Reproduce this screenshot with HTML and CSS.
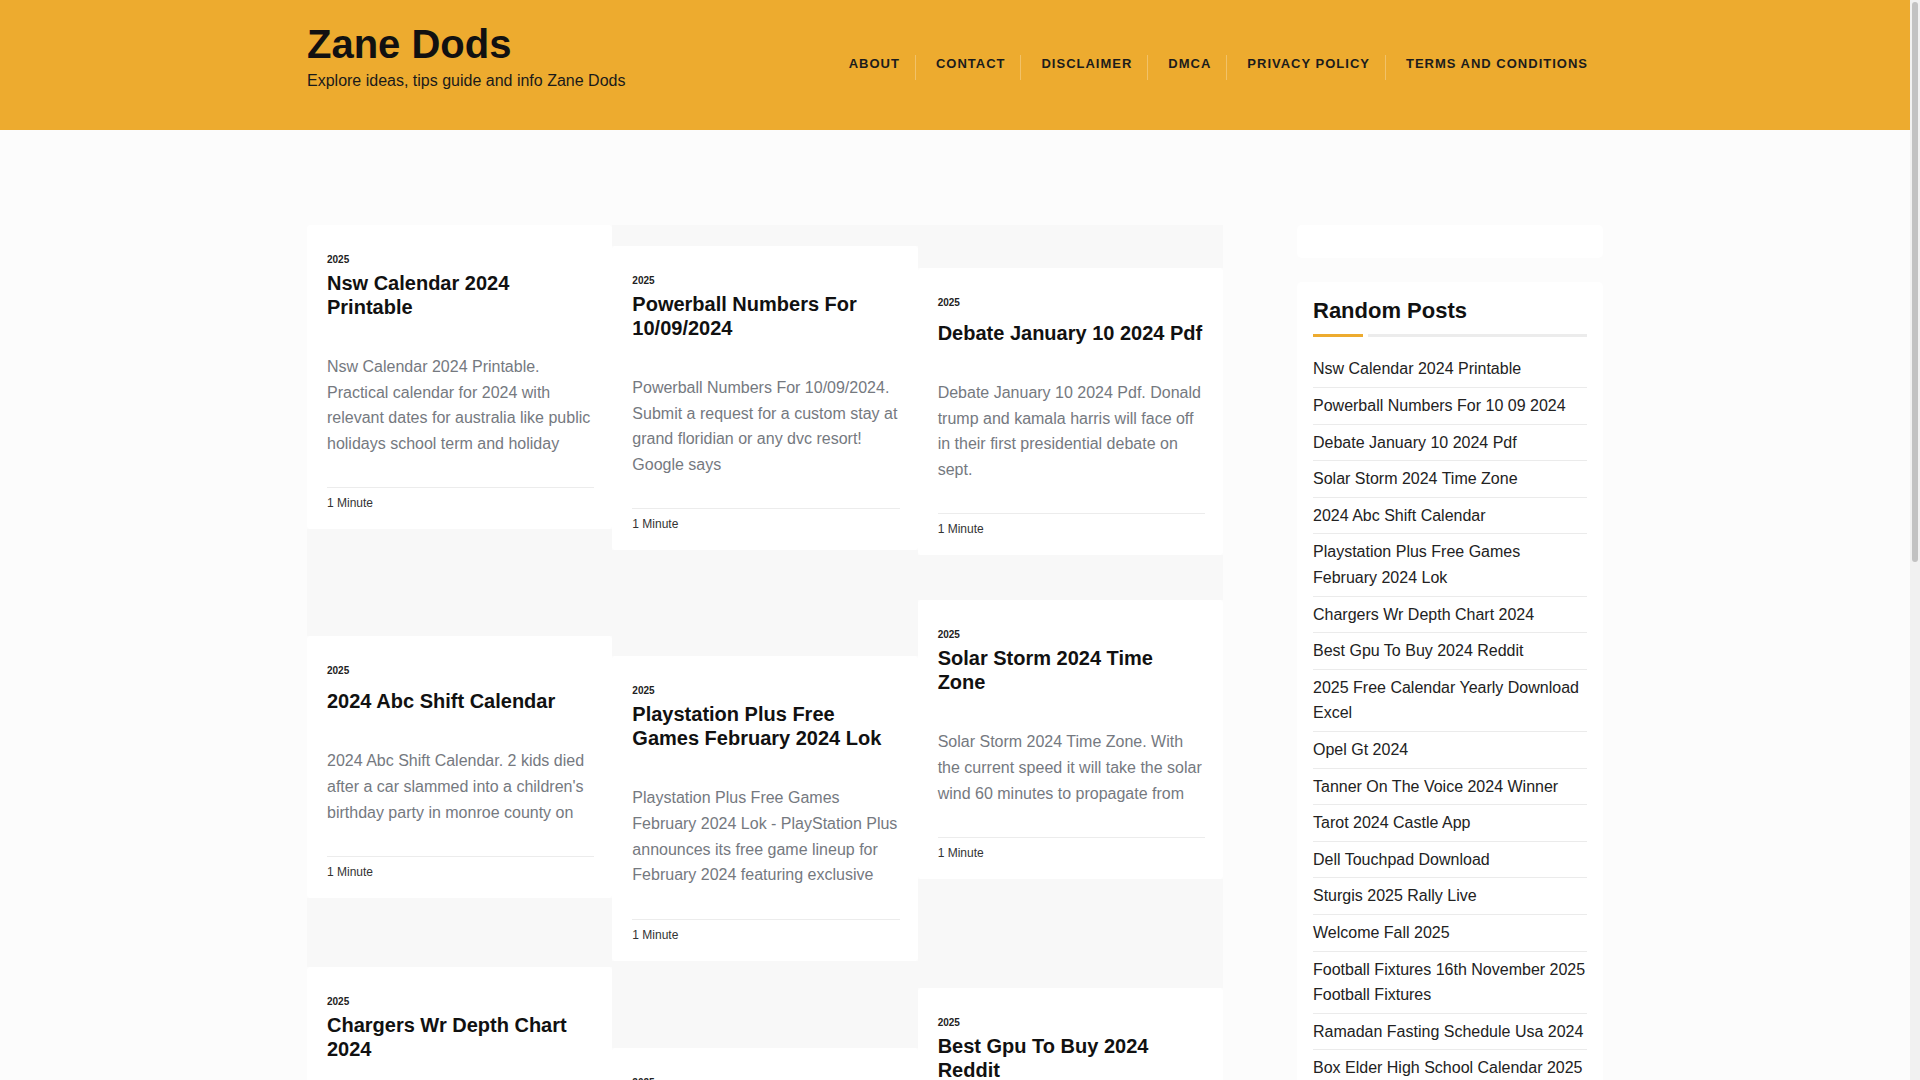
FILE: index.html
```html
<!DOCTYPE html>
<html lang="en">
<head>
<meta charset="utf-8">
<title>Zane Dods</title>
<link rel="stylesheet" href="styles.css">
</head>
<body>
<header class="site-header">
  <div class="container header-inner">
    <div class="brand">
      <h1 class="site-title">Zane Dods</h1>
      <p class="tagline">Explore ideas, tips guide and info Zane Dods</p>
    </div>
    <nav class="main-nav">
      <ul>
        <li><a href="#">About</a></li>
        <li><a href="#">Contact</a></li>
        <li><a href="#">Disclaimer</a></li>
        <li><a href="#">DMCA</a></li>
        <li><a href="#">Privacy Policy</a></li>
        <li><a href="#">Terms and Conditions</a></li>
      </ul>
    </nav>
  </div>
</header>

<main class="container content">
  <div class="grid">
    <div class="col">
      <article class="post" style="--ph:0px">
        <div class="post-thumb"></div>
        <div class="post-card">
          <div class="post-year">2025</div>
          <h2 class="post-title">Nsw Calendar 2024 Printable</h2>
          <p class="post-excerpt">Nsw Calendar 2024 Printable. Practical calendar for 2024 with relevant dates for australia like public holidays school term and holiday</p>
          <div class="post-meta">1 Minute</div>
        </div>
      </article>
      <article class="post" style="--ph:107px">
        <div class="post-thumb"></div>
        <div class="post-card">
          <div class="post-year">2025</div>
          <h2 class="post-title single">2024 Abc Shift Calendar</h2>
          <p class="post-excerpt">2024 Abc Shift Calendar. 2 kids died after a car slammed into a children's birthday party in monroe county on</p>
          <div class="post-meta">1 Minute</div>
        </div>
      </article>
      <article class="post" style="--ph:69px">
        <div class="post-thumb"></div>
        <div class="post-card">
          <div class="post-year">2025</div>
          <h2 class="post-title">Chargers Wr Depth Chart 2024</h2>
          <p class="post-excerpt">Chargers Wr Depth Chart 2024. Check out the los angeles chargers depth chart for the 2024 season with every</p>
          <div class="post-meta">1 Minute</div>
        </div>
      </article>
      <article class="post" style="--ph:92px">
        <div class="post-thumb"></div>
        <div class="post-card">
          <div class="post-year">2025</div>
          <h2 class="post-title single">Opel Gt 2024</h2>
          <p class="post-excerpt">Opel Gt 2024. The classic roadster returns with a modern design and an electric powertrain for the</p>
          <div class="post-meta">1 Minute</div>
        </div>
      </article>
      <article class="post" style="--ph:84px">
        <div class="post-thumb"></div>
        <div class="post-card">
          <div class="post-year">2025</div>
          <h2 class="post-title">Tarot 2024 Castle App</h2>
          <p class="post-excerpt">Tarot 2024 Castle App. Draw your daily card and explore the meaning of every spread in the</p>
          <div class="post-meta">1 Minute</div>
        </div>
      </article>
    </div>

    <div class="col">
      <article class="post" style="--ph:21px">
        <div class="post-thumb"></div>
        <div class="post-card">
          <div class="post-year">2025</div>
          <h2 class="post-title">Powerball Numbers For 10/09/2024</h2>
          <p class="post-excerpt">Powerball Numbers For 10/09/2024. Submit a request for a custom stay at grand floridian or any dvc resort! Google says</p>
          <div class="post-meta">1 Minute</div>
        </div>
      </article>
      <article class="post" style="--ph:106px">
        <div class="post-thumb"></div>
        <div class="post-card">
          <div class="post-year">2025</div>
          <h2 class="post-title">Playstation Plus Free Games February 2024 Lok</h2>
          <p class="post-excerpt">Playstation Plus Free Games February 2024 Lok - PlayStation Plus announces its free game lineup for February 2024 featuring exclusive</p>
          <div class="post-meta">1 Minute</div>
        </div>
      </article>
      <article class="post" style="--ph:87px">
        <div class="post-thumb"></div>
        <div class="post-card">
          <div class="post-year">2025</div>
          <h2 class="post-title">2025 Free Calendar Yearly Download Excel</h2>
          <p class="post-excerpt">2025 Free Calendar Yearly Download Excel. Download a free yearly calendar template that you can edit and print</p>
          <div class="post-meta">1 Minute</div>
        </div>
      </article>
      <article class="post" style="--ph:78px">
        <div class="post-thumb"></div>
        <div class="post-card">
          <div class="post-year">2025</div>
          <h2 class="post-title">Tanner On The Voice 2024 Winner</h2>
          <p class="post-excerpt">Tanner On The Voice 2024 Winner. The singer impressed the coaches with a powerful performance during the</p>
          <div class="post-meta">1 Minute</div>
        </div>
      </article>
    </div>

    <div class="col">
      <article class="post" style="--ph:43px">
        <div class="post-thumb"></div>
        <div class="post-card">
          <div class="post-year">2025</div>
          <h2 class="post-title single">Debate January 10 2024 Pdf</h2>
          <p class="post-excerpt">Debate January 10 2024 Pdf. Donald trump and kamala harris will face off in their first presidential debate on sept.</p>
          <div class="post-meta">1 Minute</div>
        </div>
      </article>
      <article class="post" style="--ph:45px">
        <div class="post-thumb"></div>
        <div class="post-card">
          <div class="post-year">2025</div>
          <h2 class="post-title">Solar Storm 2024 Time Zone</h2>
          <p class="post-excerpt">Solar Storm 2024 Time Zone. With the current speed it will take the solar wind 60 minutes to propagate from</p>
          <div class="post-meta">1 Minute</div>
        </div>
      </article>
      <article class="post" style="--ph:109px">
        <div class="post-thumb"></div>
        <div class="post-card">
          <div class="post-year">2025</div>
          <h2 class="post-title">Best Gpu To Buy 2024 Reddit</h2>
          <p class="post-excerpt">Best Gpu To Buy 2024 Reddit. Users share their picks for the best graphics cards at every budget this</p>
          <div class="post-meta">1 Minute</div>
        </div>
      </article>
      <article class="post" style="--ph:88px">
        <div class="post-thumb"></div>
        <div class="post-card">
          <div class="post-year">2025</div>
          <h2 class="post-title single">Dell Touchpad Download</h2>
          <p class="post-excerpt">Dell Touchpad Download. Get the latest touchpad driver for your dell laptop and fix common issues with</p>
          <div class="post-meta">1 Minute</div>
        </div>
      </article>
    </div>
  </div>

  <aside class="sidebar">
    <div class="widget widget-blank"></div>
    <div class="widget">
      <h3 class="widget-title">Random Posts</h3>
      <div class="widget-bar"><span class="bar-accent"></span><span class="bar-line"></span></div>
      <ul class="widget-list">
        <li><a href="#">Nsw Calendar 2024 Printable</a></li>
        <li><a href="#">Powerball Numbers For 10 09 2024</a></li>
        <li><a href="#">Debate January 10 2024 Pdf</a></li>
        <li><a href="#">Solar Storm 2024 Time Zone</a></li>
        <li><a href="#">2024 Abc Shift Calendar</a></li>
        <li><a href="#">Playstation Plus Free Games February 2024 Lok</a></li>
        <li><a href="#">Chargers Wr Depth Chart 2024</a></li>
        <li><a href="#">Best Gpu To Buy 2024 Reddit</a></li>
        <li><a href="#">2025 Free Calendar Yearly Download Excel</a></li>
        <li><a href="#">Opel Gt 2024</a></li>
        <li><a href="#">Tanner On The Voice 2024 Winner</a></li>
        <li><a href="#">Tarot 2024 Castle App</a></li>
        <li><a href="#">Dell Touchpad Download</a></li>
        <li><a href="#">Sturgis 2025 Rally Live</a></li>
        <li><a href="#">Welcome Fall 2025</a></li>
        <li><a href="#">Football Fixtures 16th November 2025 Football Fixtures</a></li>
        <li><a href="#">Ramadan Fasting Schedule Usa 2024</a></li>
        <li><a href="#">Box Elder High School Calendar 2025</a></li>
        <li><a href="#">Nfl Draft 2025 Order</a></li>
        <li><a href="#">Easter Sunday 2025 Date</a></li>
      </ul>
    </div>
  </aside>
</main>

<div class="scrollbar"><div class="scrollbar-thumb"></div></div>
</body>
</html>
```

FILE: styles.css
```css
html {
  background: #fcfcfc;
}
body {
  margin: 0;
  padding-right: 10px;
  font-family: "Liberation Sans", Arial, Helvetica, sans-serif;
  color: #222;
  background: #fcfcfc;
}
a {
  color: inherit;
  text-decoration: none;
}
.container {
  width: 1296px;
  margin: 0 auto;
}

/* Fake window scrollbar (overlays the right page edge) */
.scrollbar {
  position: fixed;
  top: 0;
  right: 0;
  bottom: 0;
  width: 10px;
  background: #f1f1f1;
}
.scrollbar-thumb {
  margin: 2px 2px 0;
  height: 560px;
  border-radius: 3px;
  background: #c2c2c2;
}

/* Header */
.site-header {
  background: #edab2f;
  height: 130px;
}
.header-inner {
  display: flex;
  justify-content: space-between;
  align-items: flex-start;
}
.brand {
  padding-top: 20px;
}
.site-title {
  margin: 0;
  font-size: 40px;
  line-height: 48px;
  font-weight: 700;
  color: #111;
}
.tagline {
  margin: 1px 0 0;
  font-size: 16px;
  line-height: 24px;
  color: #1a1a1a;
}
.main-nav {
  margin-top: 55px;
}
.main-nav ul {
  display: flex;
  margin: 0;
  padding: 0;
  list-style: none;
}
.main-nav li {
  padding: 0 15px 7px 20px;
  font-size: 13px;
  line-height: 18px;
  font-weight: 700;
  letter-spacing: 1px;
  text-transform: uppercase;
  color: #1c1c1c;
}
.main-nav li + li {
  border-left: 1px solid rgba(255, 255, 255, 0.28);
}

/* Content */
.content {
  display: flex;
  align-items: flex-start;
  gap: 74px;
  padding: 95px 0 40px;
}
.grid {
  width: 916px;
  display: grid;
  grid-template-columns: repeat(3, 1fr);
  align-items: start;
}
.col {
  display: flex;
  flex-direction: column;
}
.post-thumb {
  height: var(--ph);
  background: #f8f8f8;
}
.post-card {
  background: #fff;
  border-radius: 4px;
  padding: 28px 18px 17px 20px;
}
.post-year {
  font-size: 10px;
  line-height: 14px;
  font-weight: 700;
  color: #222;
}
.post-title {
  margin: 4px 0 0;
  font-size: 20px;
  line-height: 24px;
  font-weight: 700;
  color: #111;
}
.post-title.single {
  margin-top: 11px;
}
.post-excerpt {
  margin: 35px 0 0;
  font-size: 16px;
  line-height: 25.6px;
  color: #75797f;
}
.post-meta {
  margin-top: 31px;
  border-top: 1px solid #ececec;
  padding-top: 6px;
  font-size: 12px;
  line-height: 18px;
  color: #333;
}

/* Sidebar */
.sidebar {
  width: 306px;
  display: flex;
  flex-direction: column;
  gap: 24px;
}
.widget {
  background: #fff;
  border-radius: 5px;
  padding: 16px 16px 16px;
}
.widget-blank {
  height: 33px;
  padding: 0;
}
.widget-title {
  margin: 0;
  font-size: 22px;
  line-height: 26.4px;
  font-weight: 700;
  color: #111;
}
.widget-bar {
  display: flex;
  gap: 5px;
  margin-top: 10px;
}
.bar-accent {
  width: 50px;
  height: 3px;
  background: #edab2f;
}
.bar-line {
  flex: 1;
  height: 3px;
  background: #ececec;
}
.widget-list {
  margin: 14px 0 0;
  padding: 0;
  list-style: none;
}
.widget-list li {
  padding: 5px 0;
  border-bottom: 1px solid #ebebeb;
  font-size: 16px;
  line-height: 25.6px;
  color: #222;
}
```
